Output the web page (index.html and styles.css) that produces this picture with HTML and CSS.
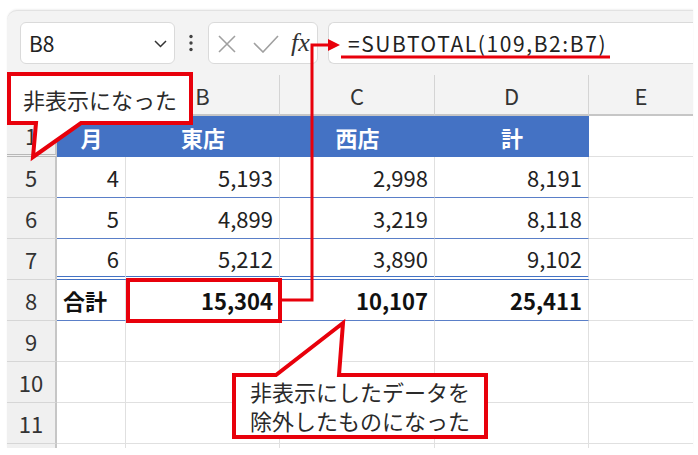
FILE: index.html
```html
<!DOCTYPE html>
<html lang="ja">
<head>
<meta charset="utf-8">
<link rel="stylesheet" href="styles.css">
</head>
<body>
<div class="app">
  <div class="fbar">
    <div class="namebox">
      <span class="nb-text">B8</span>
      <svg class="chev" width="13" height="8" viewBox="0 0 13 8"><polyline points="1,1 6.5,6.5 12,1" fill="none" stroke="#333" stroke-width="1.5"/></svg>
    </div>
    <svg class="dots" width="6" height="18" viewBox="0 0 6 18"><circle cx="3" cy="2.5" r="1.7" fill="#444"/><circle cx="3" cy="9" r="1.7" fill="#444"/><circle cx="3" cy="15.5" r="1.7" fill="#444"/></svg>
    <div class="fxbox">
      <svg class="ico-x" width="18" height="18" viewBox="0 0 18 18"><path d="M1 1L17 17M17 1L1 17" stroke="#a0a0a0" stroke-width="1.6" fill="none"/></svg>
      <svg class="ico-check" width="26" height="18" viewBox="0 0 26 18"><polyline points="1,8 10,17 25,1" fill="none" stroke="#a0a0a0" stroke-width="1.6"/></svg>
      <span class="fx">fx</span>
    </div>
    <div class="formula"><span>=SUBTOTAL(109,B2:B7)</span></div>
  </div>

  <div class="sheet">
    <div class="corner"></div>
    <div class="ch"></div><div class="ch">B</div><div class="ch">C</div><div class="ch">D</div><div class="ch last">E</div>

    <div class="rh hid">1</div>
    <div class="th">月</div><div class="th">東店</div><div class="th">西店</div><div class="th">計</div><div class="e"></div>

    <div class="rh">5</div>
    <div class="d">4</div><div class="d">5,193</div><div class="d">2,998</div><div class="d">8,191</div><div class="e"></div>

    <div class="rh">6</div>
    <div class="d">5</div><div class="d">4,899</div><div class="d">3,219</div><div class="d">8,118</div><div class="e"></div>

    <div class="rh">7</div>
    <div class="d dbl">6</div><div class="d dbl">5,212</div><div class="d dbl">3,890</div><div class="d dbl">9,102</div><div class="e"></div>

    <div class="rh">8</div>
    <div class="d tot lbl">合計</div><div class="d tot">15,304</div><div class="d tot">10,107</div><div class="d tot">25,411</div><div class="e"></div>

    <div class="rh">9</div>
    <div class="g"></div><div class="g"></div><div class="g"></div><div class="g"></div><div class="e"></div>

    <div class="rh">10</div>
    <div class="g"></div><div class="g"></div><div class="g"></div><div class="g"></div><div class="e"></div>

    <div class="rh">11</div>
    <div class="g"></div><div class="g"></div><div class="g"></div><div class="g"></div><div class="e"></div>

    <div class="rh"></div>
    <div class="g"></div><div class="g"></div><div class="g"></div><div class="g"></div><div class="e"></div>
  </div>
</div>

<svg class="overlay" width="698" height="455" viewBox="0 0 698 455">
  <polygon points="9,74 191,74 191,123 81,123 33,157 36,123 9,123" fill="#fff" stroke="#e8000b" stroke-width="4" stroke-linejoin="miter"/>
  <rect x="128" y="280" width="152" height="41" fill="none" stroke="#e8000b" stroke-width="4"/>
  <polyline points="280,300 312,300 312,45 330,45" fill="none" stroke="#e8000b" stroke-width="3"/>
  <polygon points="328,39 340,45 328,51" fill="#e8000b"/>
  <line x1="341" y1="57" x2="610" y2="57" stroke="#e8000b" stroke-width="3"/>
  <polygon points="234,375 276,375 343,323 339,375 486,375 486,437 234,437" fill="#fff" stroke="#e8000b" stroke-width="4" stroke-linejoin="miter"/>
</svg>
<div class="callout c1">非表示になった</div>
<div class="callout c2">非表示にしたデータを<br>除外したものになった</div>
</body>
</html>
```

FILE: styles.css
```css
* { box-sizing: border-box; }
html, body { margin: 0; padding: 0; background: #fff; }
body {
  width: 698px;
  height: 455px;
  position: relative;
  overflow: hidden;
  font-family: "Noto Sans CJK JP", "Noto Sans", sans-serif;
  color: #222;
}
.app {
  margin: 10px 5px 0 7px;
  height: 438px;
  background: #f3f3f3;
  border-top-left-radius: 10px;
  border-top: 1px solid #e2e2e2;
  box-shadow: 0 -1px 2px rgba(0,0,0,0.06);
  overflow: hidden;
}
.fbar {
  display: flex;
  align-items: center;
  padding: 11px 0 0 13px;
  height: 53px;
}
.namebox {
  width: 155px;
  height: 42px;
  background: #fff;
  border: 1px solid #dadada;
  border-radius: 6px;
  display: flex;
  align-items: center;
  justify-content: space-between;
  padding: 0 7px 0 8px;
}
.nb-text { font-size: 21px; color: #222; }
.chev { margin-top: 1px; }
.dots { margin-left: 13px; }
.fxbox {
  margin-left: 14px;
  width: 110px;
  height: 42px;
  background: #fff;
  border: 1px solid #dadada;
  border-radius: 6px;
  display: flex;
  align-items: center;
  padding-left: 9px;
}
.ico-x { margin-top: 2px; }
.ico-check { margin-left: 17px; margin-top: 1px; }
.fx {
  margin-left: 12px;
  font-family: "Liberation Serif", "DejaVu Serif", serif;
  font-style: italic;
  font-size: 26px;
  color: #333;
  line-height: 1;
}
.formula {
  margin-left: 10px;
  flex: 1;
  height: 42px;
  background: #fff;
  border: 1px solid #dadada;
  border-right: none;
  border-radius: 6px 0 0 6px;
  display: flex;
  align-items: center;
  padding-left: 19px;
  font-size: 21px;
  letter-spacing: 1.6px;
  color: #222;
}
.sheet {
  margin-top: 11px;
  display: grid;
  grid-template-columns: 50px 69px 154px 155px 154px 104px;
  grid-auto-rows: 41px;
  font-size: 22px;
}
.sheet > div {
  display: flex;
  align-items: center;
}
.corner {
  border-right: 2px solid #c6c6c6;
  border-bottom: 1px solid #c6c6c6;
}
.ch {
  justify-content: center;
  color: #333;
  border-right: 1px solid #d4d4d4;
  border-bottom: 2px solid #c6c6c6;
}
.ch.last { border-right: none; }
.rh {
  justify-content: center;
  color: #333;
  background: #f0f0f0;
  border-right: 2px solid #c6c6c6;
  border-bottom: 1px solid #d6d6d6;
}
.rh.hid { border-bottom: 3px double #b8b8b8; }
.th {
  justify-content: center;
  background: #4472c4;
  color: #fff;
  font-weight: bold;
}
.d {
  justify-content: flex-end;
  padding-right: 6px;
  background: #fff;
  border-right: 1px solid #e0e0e0;
  border-bottom: 1px solid #5a7fc8;
}
.d.dbl { border-bottom: 4px double #4472c4; }
.d.tot { font-weight: bold; color: #111; }
.d.lbl { justify-content: flex-start; padding-left: 6px; }
.g {
  background: #fff;
  border-right: 1px solid #e0e0e0;
  border-bottom: 1px solid #e0e0e0;
}
.e {
  background: #fff;
  border-bottom: 1px solid #e0e0e0;
}
.overlay {
  position: absolute;
  left: 0;
  top: 0;
  pointer-events: none;
}
.callout {
  position: absolute;
  display: flex;
  align-items: center;
  justify-content: center;
  text-align: center;
  font-size: 22px;
  color: #2a2a2a;
}
.c1 { left: 9px; top: 74px; width: 182px; height: 49px; }
.c2 { left: 234px; top: 375px; width: 252px; height: 62px; line-height: 29px; }
```
